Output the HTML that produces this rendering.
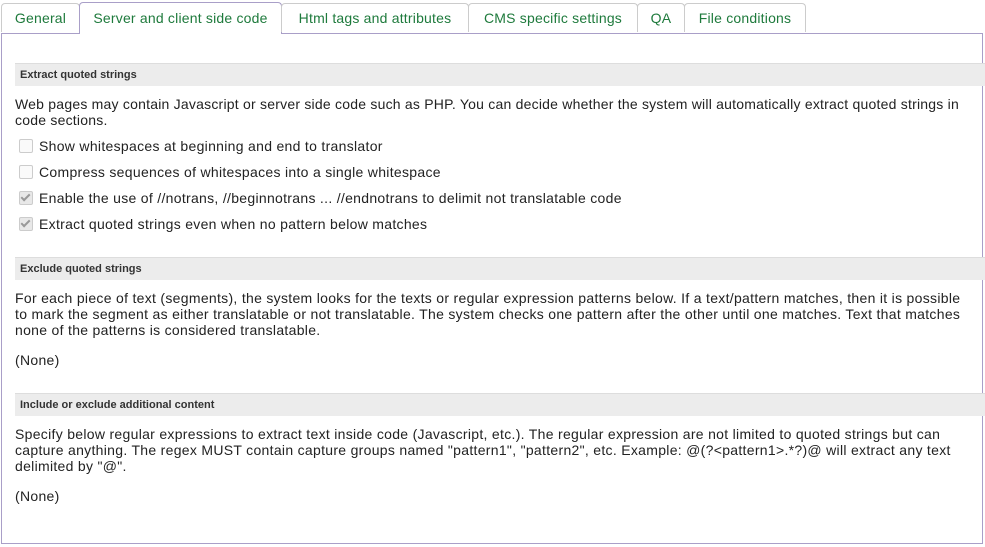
<!DOCTYPE html>
<html><head><style>
body{margin:0;width:985px;height:547px;background:#fff;font-family:"Liberation Sans",sans-serif;color:#222;overflow:hidden;position:relative}
.tab{position:absolute;top:3px;height:29px;border:1px solid #ccc;border-bottom:none;border-radius:4px 4px 0 0;background:#fff;color:#1e7a3c;font-size:14px;line-height:29px;text-align:center;box-sizing:border-box;letter-spacing:0.2px}
.panel{position:absolute;left:1px;top:33px;width:982px;height:511px;border:1px solid #a99fc8;box-sizing:border-box}
.hd{position:absolute;left:15px;width:970px;height:23px;background:#ececec;border-top:1px solid #ddd;font-size:11px;font-weight:bold;line-height:23px;padding-left:5px;box-sizing:border-box;color:#333}
.t{position:absolute;left:15px;font-size:14px;line-height:16px;letter-spacing:0.3px;white-space:nowrap}
.cb{position:absolute;left:19px;width:12px;height:12px;border:1px solid #ccc;border-radius:2px;background:#fafafa}
.cb.c{background:#e8e8e8}
.cb.c::after{content:"";position:absolute;left:3px;top:0px;width:3px;height:7px;border:solid #999;border-width:0 2px 2px 0;transform:rotate(45deg)}
.l{position:absolute;left:39px;font-size:14px;line-height:16px;letter-spacing:0.3px;white-space:nowrap}
</style></head><body>
<div class="panel"></div>
<div class="tab" style="left:1px;width:79px">General</div>
<div class="tab" style="left:79px;width:203px;top:2px;height:32px;border-color:#a99fc8;line-height:31px">Server and client side code</div>
<div class="tab" style="left:281px;width:188px">Html tags and attributes</div>
<div class="tab" style="left:468px;width:170px">CMS specific settings</div>
<div class="tab" style="left:637px;width:48px">QA</div>
<div class="tab" style="left:684px;width:122px">File conditions</div>

<div class="hd" style="top:63px">Extract quoted strings</div>
<div class="t" style="top:96px;letter-spacing:0.22px">Web pages may contain Javascript or server side code such as PHP. You can decide whether the system will automatically extract quoted strings in<br>code sections.</div>
<div class="cb" style="top:139px"></div><div class="l" style="top:138px">Show whitespaces at beginning and end to translator</div>
<div class="cb" style="top:165px"></div><div class="l" style="top:164px">Compress sequences of whitespaces into a single whitespace</div>
<div class="cb c" style="top:191px"></div><div class="l" style="top:190px">Enable the use of //notrans, //beginnotrans ... //endnotrans to delimit not translatable code</div>
<div class="cb c" style="top:217px"></div><div class="l" style="top:216px">Extract quoted strings even when no pattern below matches</div>

<div class="hd" style="top:257px">Exclude quoted strings</div>
<div class="t" style="top:290px">For each piece of text (segments), the system looks for the texts or regular expression patterns below. If a text/pattern matches, then it is possible<br>to mark the segment as either translatable or not translatable. The system checks one pattern after the other until one matches. Text that matches<br>none of the patterns is considered translatable.</div>
<div class="t" style="top:352px">(None)</div>

<div class="hd" style="top:393px">Include or exclude additional content</div>
<div class="t" style="top:426px">Specify below regular expressions to extract text inside code (Javascript, etc.). The regular expression are not limited to quoted strings but can<br>capture anything. The regex MUST contain capture groups named "pattern1", "pattern2", etc. Example: @(?&lt;pattern1&gt;.*?)@ will extract any text<br>delimited by "@".</div>
<div class="t" style="top:488px">(None)</div>
</body></html>
